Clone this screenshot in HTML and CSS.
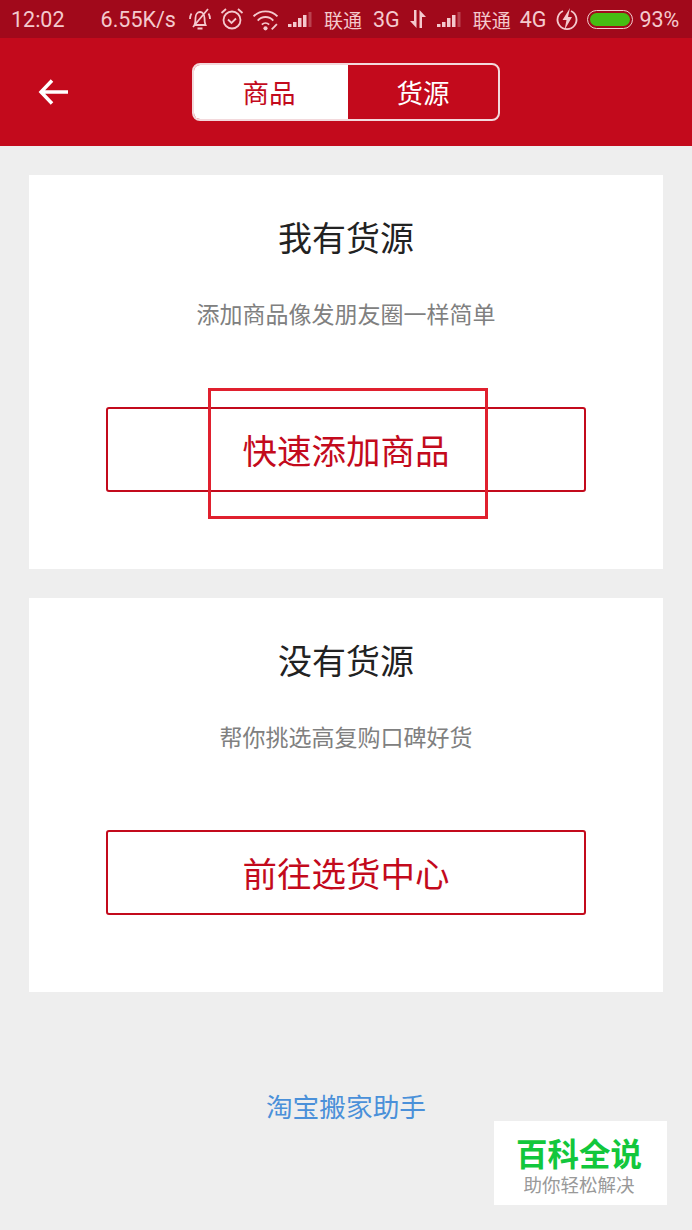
FILE: index.html
```html
<!DOCTYPE html>
<html lang='en'>
<head>
  <meta charset='UTF-8'>
  <meta name='viewport' content='width=device-width,initial-scale=1.0'>
  <title>货源</title>
  <link rel="stylesheet" href="styles.css">
</head>
<body>
  <div class='page'>
    <!-- STATUS BAR -->
    <div class='status'>
      <span class='time'>12:02</span>
      <span class='speed'>6.55K/s</span>
      <svg class='ico mute' viewBox='0 0 24 24'><path d='M6.500 18c1-2 1-4 1-7C7.500 7.500 9.500 5 12 5s4.500 2.500 4.500 6c0 3 0 5 1 7z M9.500 21.500h5 M2 12c0-2.500.5-4 1.500-5.500 M22 12c0-2.500-.5-4-1.500-5.500 M5 20L20 2'/></svg>
      <svg class='ico alarm' viewBox='0 0 24 24'><circle cx='12' cy='13' r='8.500'/><path d='M1.500 6L6 2 M22.500 6L18 2 M8 12.500l3.500 3.500 4.500-4.500'/></svg>
      <svg class='ico wifi' viewBox='0 0 26 22'><path d='M1.500 8c6-6.500 17-6.500 23 0 M5.500 12c4-4.500 11-4.500 15 0 M9.500 16c2-2 5-2 7 0'/><circle class='fillw' cx='13' cy='19.500' r='2'/><path d='M19 20.500l5-5'/></svg>
      <svg class='sig sig1' viewBox='0 0 24 18'><rect x='0' y='13' width='3.500' height='3'/><rect x='5' y='11' width='3.500' height='5'/><rect x='10' y='7' width='3.500' height='9'/><rect x='15' y='4' width='3.500' height='12'/><rect class='dim' x='20.500' y='1' width='3' height='15'/></svg>
      <span class='carrier'>联通</span>
      <span class='net'>3G</span>
      <svg class='arrows' viewBox='0 0 18 20'><path d='M5 1h2.500v18L1 12h4z M10.500 19V1L17 8h-4v11z'/></svg>
      <svg class='sig sig2' viewBox='0 0 24 18'><rect x='0' y='13' width='3.500' height='3'/><rect x='5' y='11' width='3.500' height='5'/><rect x='10' y='7' width='3.500' height='9'/><rect x='15' y='4' width='3.500' height='12'/><rect class='dim' x='20.500' y='1' width='3' height='15'/></svg>
      <span class='carrier'>联通</span>
      <span class='net n4'>4G</span>
      <svg class='ico bolt' viewBox='0 0 24 24'><path d='M8 4a9.500 9.500 0 1 0 8 0'/><path class='fillw' d='M15 1L7.500 13h4L9.500 23 17 10h-4z'/></svg>
      <span class='battery'><span class='level'></span></span>
      <span class='pct'>93%</span>
    </div>

    <!-- HEADER -->
    <div class='head'>
      <svg class='back' viewBox='0 0 32 28'><path d='M30 14H3 M14 2.500L3 14l11 11.500'/></svg>
      <div class='tabs'>
        <span class='tab on'>商品</span>
        <span class='tab'>货源</span>
      </div>
    </div>

    <!-- CARDS -->
    <div class='main'>
      <div class='card'>
        <h2>我有货源</h2>
        <p>添加商品像发朋友圈一样简单</p>
        <a class='btn'>快速添加商品</a>
      </div>
      <div class='card'>
        <h2>没有货源</h2>
        <p>帮你挑选高复购口碑好货</p>
        <a class='btn'>前往选货中心</a>
      </div>
      <a class='link'>淘宝搬家助手</a>
    </div>

    <!-- overlays -->
    <div class='mark'></div>
    <div class='wm'>
      <b>百科全说</b>
      <span>助你轻松解决</span>
    </div>
  </div>
</body>
</html>
```

FILE: styles.css
```css
*{box-sizing:border-box;font-family:Roboto,"Noto Sans CJK SC",sans-serif}
body{margin:0;background:#eeeeee}
.page{position:relative;width:692px;height:1230px;overflow:hidden;background:#eeeeee}

.status{display:flex;align-items:center;height:38px;padding-left:11px;background:#a1091b;color:#f4c9ce;font-size:21.500px;white-space:nowrap}
.speed{margin-left:36px}
.ico{flex:none;width:24px;height:24px;fill:none;stroke:#f4c9ce;stroke-width:1.800}
.ico .fillw{fill:#f4c9ce;stroke:none}
.mute{margin-left:12px}
.alarm{margin-left:8px}
.wifi{width:27px;height:23px;margin-left:8px}
.sig{flex:none;width:24px;height:18px;margin-top:2px;fill:#f4c9ce}
.sig .dim{opacity:.3}
.sig1{margin-left:9px}
.carrier{margin-left:12px;font-size:19px}
.net{margin-left:11px}
.n4{margin-left:9px}
.arrows{flex:none;width:18px;height:20px;margin-left:9px;fill:#f4c9ce}
.sig2{margin-left:10px}
.bolt{margin-left:9px}
.battery{display:block;flex:none;width:46px;height:19px;margin-left:8px;padding:2px;border:1.500px solid #f4c9ce;border-radius:10px}
.level{display:block;height:100%;background:#46bc12;border-radius:7px}
.pct{margin-left:6px}

.head{position:relative;display:flex;justify-content:center;align-items:center;height:108px;background:#c30a1c}
.back{position:absolute;left:38px;top:40px;width:32px;height:28px;fill:none;stroke:#fff;stroke-width:3.500}
.tabs{display:flex;width:308px;height:58px;border:2px solid #f3d9dc;border-radius:8px;overflow:hidden}
.tab{flex:1;display:flex;justify-content:center;align-items:center;padding-bottom:2px;color:#fff;font-size:26.500px}
.tab.on{flex:0 0 154px;padding-right:4px;background:#fff;color:#c30a1c}

.main{display:flex;flex-direction:column;align-items:center;padding:29px 29px 0;gap:29px}
.card{display:flex;flex-direction:column;align-items:center;width:634px;height:394px;background:#fff;padding-top:40px}
.card h2{margin:0;font-size:34px;font-weight:400;line-height:48px;color:#222}
.card p{margin:36px 0 0;font-size:23px;line-height:34px;color:#808080}
.btn{display:flex;justify-content:center;align-items:center;width:480px;height:85px;margin-top:74px;padding-bottom:2px;border:2px solid #c30a1c;border-radius:3px;color:#c30a1c;font-size:34.500px}
.link{margin-top:70px;font-size:26.700px;line-height:34px;color:#4a90d9}

.mark{position:absolute;left:208px;top:388px;width:280px;height:131px;border:3px solid #e0202e}
.wm{position:absolute;left:494px;top:1121px;width:173px;height:84px;display:flex;flex-direction:column;align-items:center;padding:16px 3px 0 0;background:#fff}
.wm b{font-size:31.500px;line-height:38px;color:#12c73c}
.wm span{font-size:18.500px;line-height:22px;color:#999}
```
